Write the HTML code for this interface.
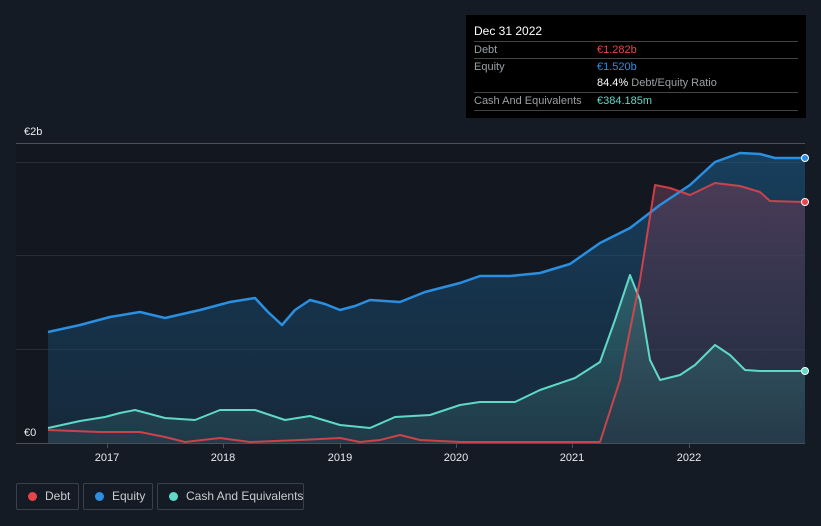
<!DOCTYPE html><html style="width:821px;height:526px;overflow:hidden"><head><style>
body{margin:0;width:821px;height:526px;background:#151b25;font-family:"Liberation Sans",sans-serif;overflow:hidden;position:relative}
.tt{position:absolute;left:466px;top:15px;width:340px;height:103px;background:#000;color:#fff;font-size:11px}
.tt .r{position:absolute;left:8px;width:324px;border-top:1px solid #444;height:17px}
.lab{color:#9aa0a6}
.leg{position:absolute;top:483px;height:27px;border:1px solid #3a404a;border-radius:2px;color:#c8ccd0;font-size:12px;line-height:25px;box-sizing:border-box;white-space:nowrap}
.leg i{position:absolute;top:8px;left:11px;width:9px;height:9px;border-radius:50%}
.leg span{position:absolute;left:28px;white-space:nowrap}
</style></head><body>
<svg width="821" height="526" style="position:absolute;left:0;top:0">
<defs>
<linearGradient id="ge" x1="0" y1="0" x2="0" y2="1"><stop offset="0" stop-color="#1c5f8f" stop-opacity=".55"/><stop offset="1" stop-color="#1c4a6e" stop-opacity=".35"/></linearGradient>
<linearGradient id="gd" x1="0" y1="0" x2="0" y2="1"><stop offset="0" stop-color="#6b3b55" stop-opacity=".6"/><stop offset="1" stop-color="#3a3048" stop-opacity=".3"/></linearGradient>
<linearGradient id="gc" x1="0" y1="0" x2="0" y2="1"><stop offset="0" stop-color="#3a7f80" stop-opacity=".6"/><stop offset="1" stop-color="#2a4a55" stop-opacity=".5"/></linearGradient>
</defs>
<rect x="16" y="143" width="789" height="300" fill="#121720"/>
<line x1="16" y1="143.5" x2="805" y2="143.5" stroke="#4a4f58"/>
<line x1="16" y1="162.5" x2="805" y2="162.5" stroke="#262b34"/>
<line x1="16" y1="255.5" x2="805" y2="255.5" stroke="#262b34"/>
<line x1="16" y1="349.5" x2="805" y2="349.5" stroke="#262b34"/>
<path d="M48,332 L80,325 110,317 140,312 165,318 200,310 230,302 255,298 268,312 282,325 295,310 310,300 325,304 340,310 355,306 370,300 400,302 425,292 460,283 480,276 510,276 540,273 570,264 600,243 630,228 660,205 690,185 715,162 740,153 760,154 775,158 805,158 L805,443 48,443Z" fill="url(#ge)"/>
<path d="M48,430 L100,432 140,432 165,437 185,442 220,438 250,442 300,440 340,438 360,442 380,440 400,435 420,440 460,442 600,442 620,380 640,280 655,185 670,188 690,195 715,183 740,186 760,192 770,201 805,202 L805,443 48,443Z" fill="url(#gd)"/>
<path d="M48,428 L80,421 105,417 120,413 135,410 150,414 165,418 195,420 220,410 255,410 270,415 285,420 310,416 340,425 370,428 395,417 430,415 460,405 480,402 515,402 540,390 575,378 600,362 615,320 630,275 640,300 650,360 660,380 680,375 695,365 715,345 730,355 745,370 760,371 805,371 L805,443 48,443Z" fill="url(#gc)"/>
<path d="M48,332 L80,325 110,317 140,312 165,318 200,310 230,302 255,298 268,312 282,325 295,310 310,300 325,304 340,310 355,306 370,300 400,302 425,292 460,283 480,276 510,276 540,273 570,264 600,243 630,228 660,205 690,185 715,162 740,153 760,154 775,158 805,158" fill="none" stroke="#2a8fe0" stroke-width="2.5" stroke-linejoin="round"/>
<path d="M48,428 L80,421 105,417 120,413 135,410 150,414 165,418 195,420 220,410 255,410 270,415 285,420 310,416 340,425 370,428 395,417 430,415 460,405 480,402 515,402 540,390 575,378 600,362 615,320 630,275 640,300 650,360 660,380 680,375 695,365 715,345 730,355 745,370 760,371 805,371" fill="none" stroke="#5fd8c8" stroke-width="2" stroke-linejoin="round"/>
<path d="M48,430 L100,432 140,432 165,437 185,442 220,438 250,442 300,440 340,438 360,442 380,440 400,435 420,440 460,442 600,442 620,380 640,280 655,185 670,188 690,195 715,183 740,186 760,192 770,201 805,202" fill="none" stroke="#e8444a" stroke-width="2" stroke-linejoin="round" opacity=".85"/>
<line x1="16" y1="443.5" x2="805" y2="443.5" stroke="#4a4f58"/>
<g stroke="#4a4f58"><line x1="107.5" y1="443" x2="107.5" y2="448"/><line x1="223.5" y1="443" x2="223.5" y2="448"/><line x1="340.5" y1="443" x2="340.5" y2="448"/><line x1="456.5" y1="443" x2="456.5" y2="448"/><line x1="572.5" y1="443" x2="572.5" y2="448"/><line x1="689.5" y1="443" x2="689.5" y2="448"/></g>
<circle cx="805" cy="158" r="3.5" fill="#2a8fe0" stroke="#fff" stroke-width="1"/>
<circle cx="805" cy="202" r="3.5" fill="#e8444a" stroke="#fff" stroke-width="1"/>
<circle cx="805" cy="371" r="3.5" fill="#5fd8c8" stroke="#fff" stroke-width="1"/>
<g fill="#e8eaed" font-size="11" text-anchor="middle"><text x="107" y="461">2017</text><text x="223" y="461">2018</text><text x="340" y="461">2019</text><text x="456" y="461">2020</text><text x="572" y="461">2021</text><text x="689" y="461">2022</text></g>
<text x="24" y="135" fill="#e8eaed" font-size="11">€2b</text>
<text x="24" y="436" fill="#e8eaed" font-size="11">€0</text>
</svg>
<div class="tt">
<div style="position:absolute;left:8px;top:9px;font-size:12px">Dec 31 2022</div>
<div class="r" style="top:26px"><span class="lab" style="position:absolute;top:2px">Debt</span><span style="position:absolute;left:123px;top:2px;color:#e8444a">€1.282b</span></div>
<div class="r" style="top:43px"><span class="lab" style="position:absolute;top:2px">Equity</span><span style="position:absolute;left:123px;top:2px;color:#2a8fe0">€1.520b</span></div>
<div style="position:absolute;left:131px;top:62px"><b style="font-weight:normal">84.4%</b> <span class="lab">Debt/Equity Ratio</span></div>
<div class="r" style="top:77px;border-bottom:1px solid #444"><span class="lab" style="position:absolute;top:2px">Cash And Equivalents</span><span style="position:absolute;left:123px;top:2px;color:#5fd8c8">€384.185m</span></div>
</div>
<div class="leg" style="left:16px;width:63px"><i style="background:#e8444a"></i><span>Debt</span></div>
<div class="leg" style="left:83px;width:70px"><i style="background:#2a8fe0"></i><span>Equity</span></div>
<div class="leg" style="left:157px;width:147px"><i style="background:#5fd8c8"></i><span>Cash And Equivalents</span></div>
</body></html>
